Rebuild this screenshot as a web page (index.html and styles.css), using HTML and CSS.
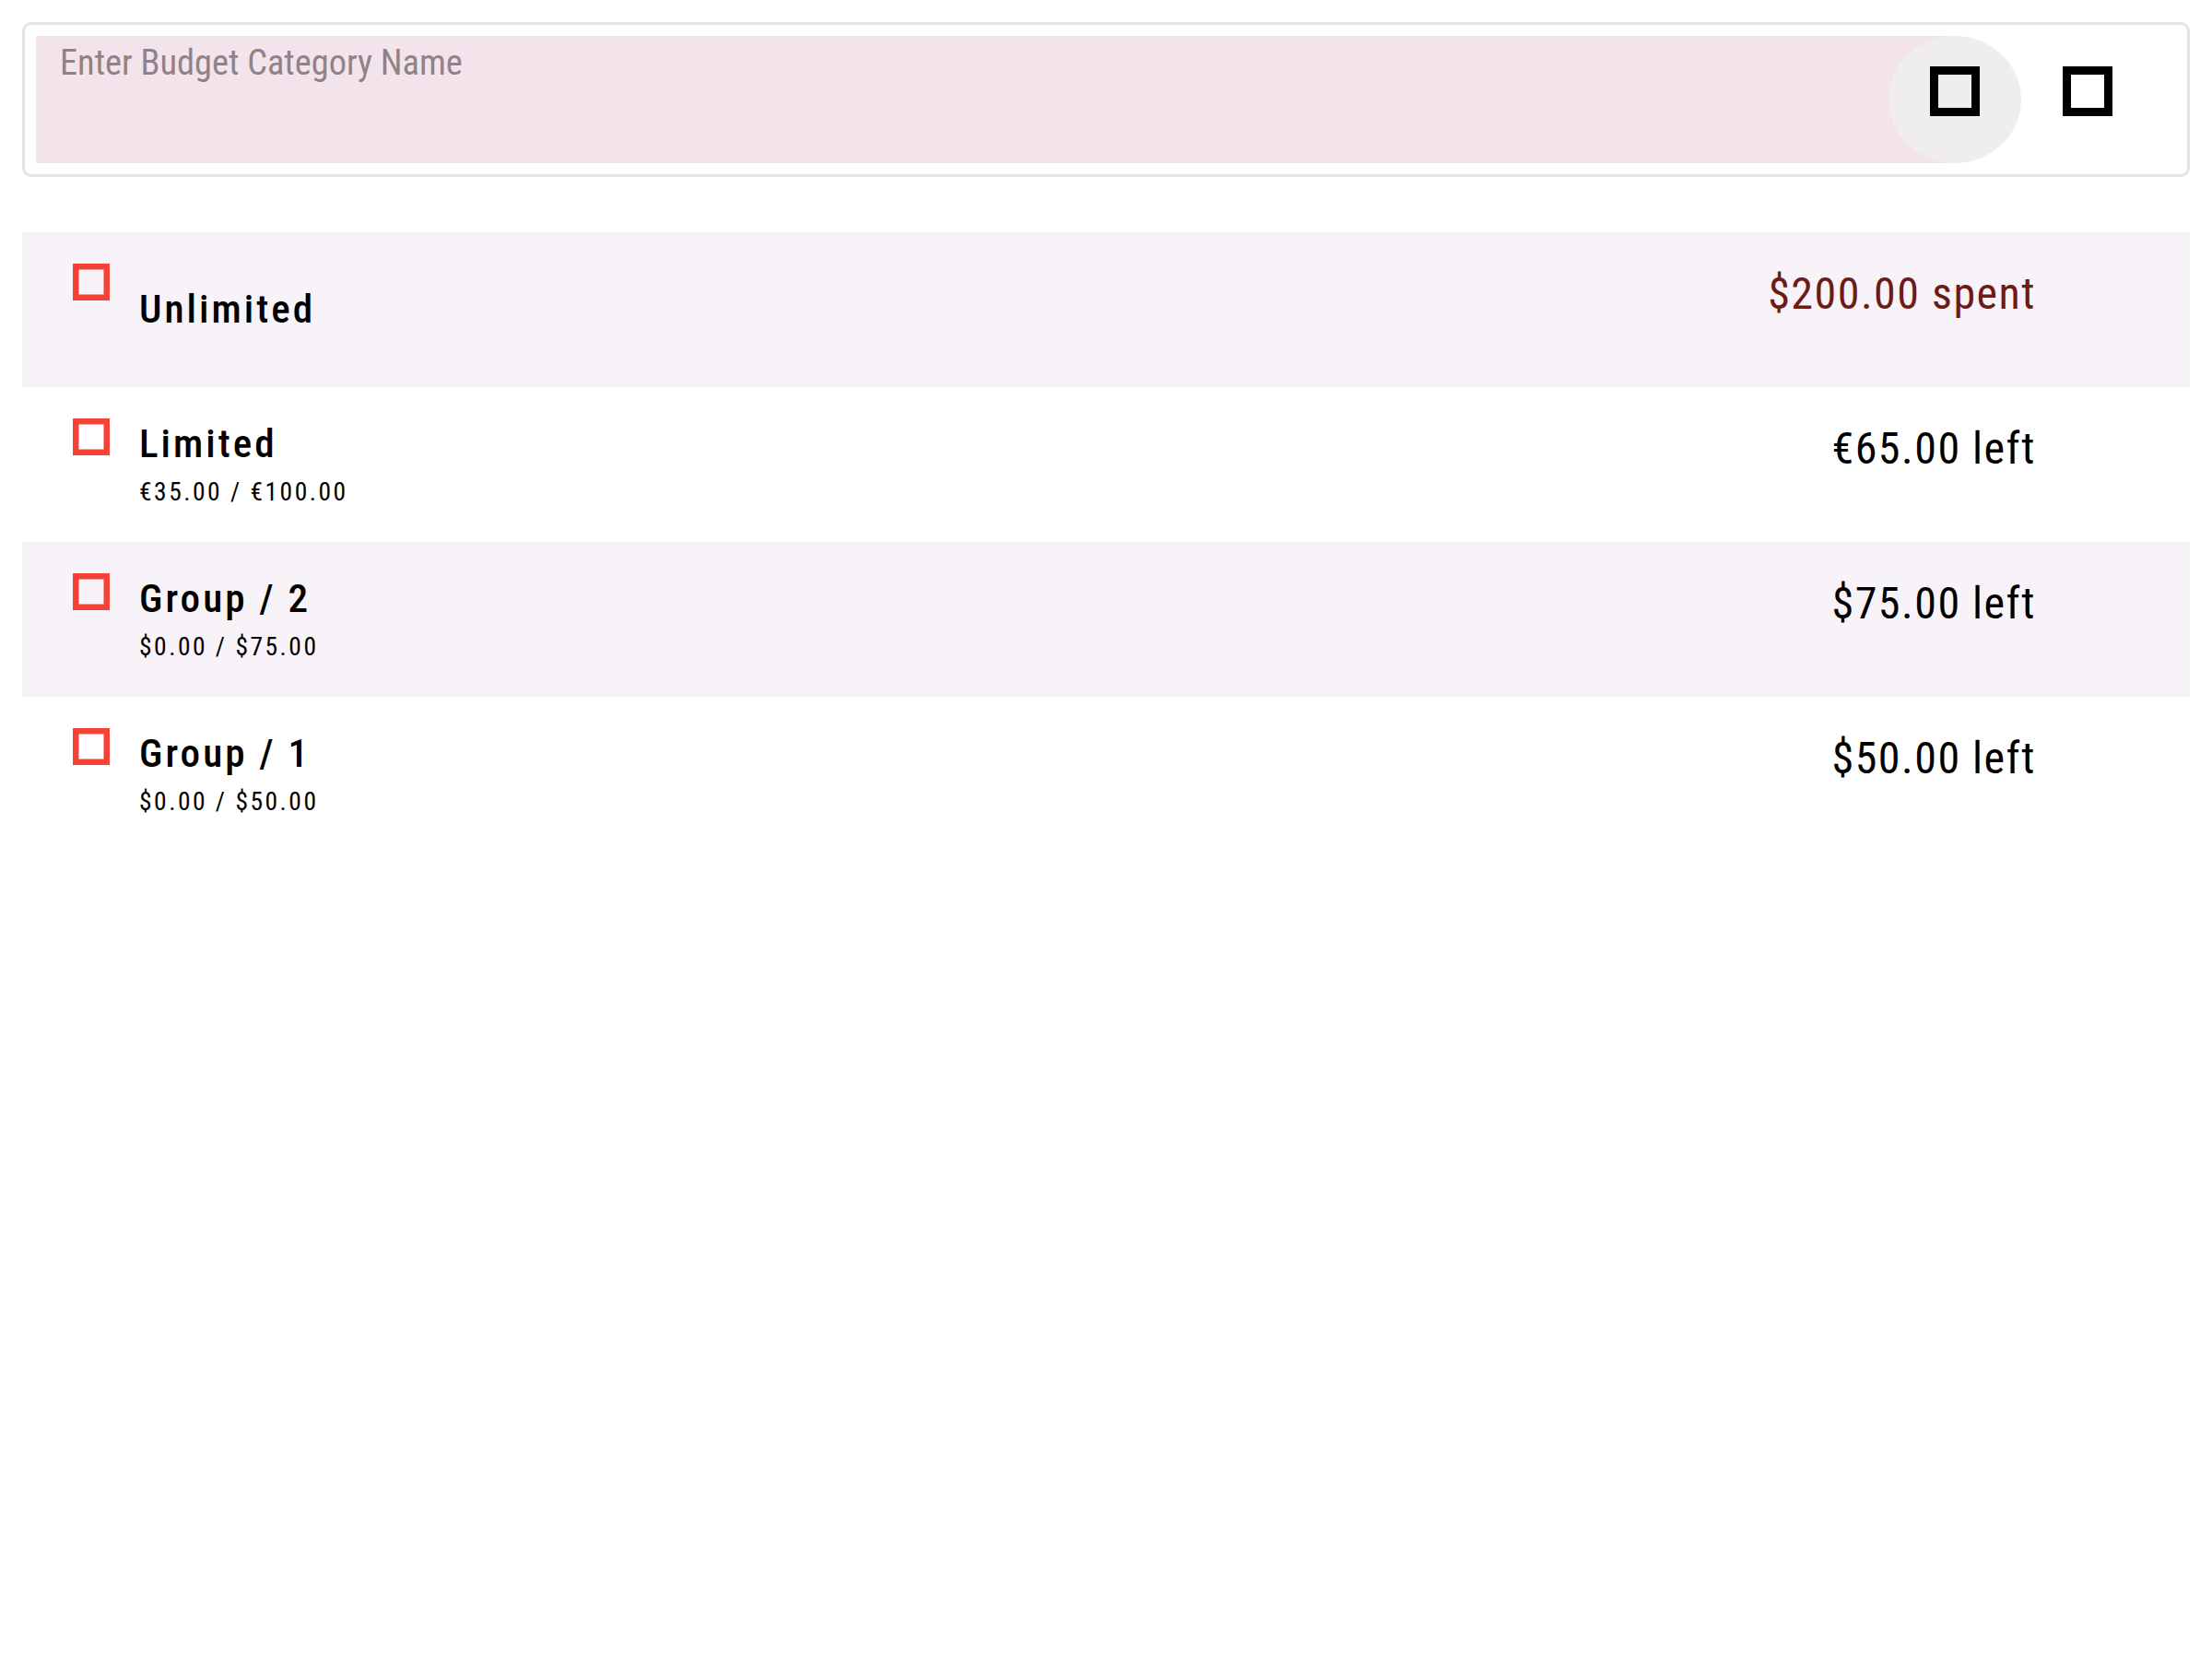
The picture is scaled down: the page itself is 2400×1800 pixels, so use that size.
FILE: index.html
```html
<!DOCTYPE html>
<html lang="en">
<head>
<meta charset="utf-8">
<title>Budget Categories</title>
<link rel="stylesheet" href="styles.css">
</head>
<body>
  <div class="search-card">
    <div class="field">
      <span class="placeholder">Enter Budget Category Name</span>
    </div>
    <button class="icon-btn active" type="button" aria-label="Search"><span class="glyph"></span></button>
    <button class="icon-btn" type="button" aria-label="Add"><span class="glyph"></span></button>
  </div>

  <div class="list">
    <div class="row shaded">
      <svg class="check" viewBox="0 0 40 40" aria-hidden="true"><rect x="3.25" y="3.25" width="33.5" height="33.5" fill="none" stroke="#f44336" stroke-width="6.5"/></svg>
      <div class="text single">
        <div class="title">Unlimited</div>
      </div>
      <div class="amount spent">$200.00 spent</div>
    </div>
    <div class="row">
      <svg class="check" viewBox="0 0 40 40" aria-hidden="true"><rect x="3.25" y="3.25" width="33.5" height="33.5" fill="none" stroke="#f44336" stroke-width="6.5"/></svg>
      <div class="text">
        <div class="title">Limited</div>
        <div class="subtitle">€35.00 / €100.00</div>
      </div>
      <div class="amount">€65.00 left</div>
    </div>
    <div class="row shaded">
      <svg class="check" viewBox="0 0 40 40" aria-hidden="true"><rect x="3.25" y="3.25" width="33.5" height="33.5" fill="none" stroke="#f44336" stroke-width="6.5"/></svg>
      <div class="text">
        <div class="title">Group / 2</div>
        <div class="subtitle">$0.00 / $75.00</div>
      </div>
      <div class="amount">$75.00 left</div>
    </div>
    <div class="row">
      <svg class="check" viewBox="0 0 40 40" aria-hidden="true"><rect x="3.25" y="3.25" width="33.5" height="33.5" fill="none" stroke="#f44336" stroke-width="6.5"/></svg>
      <div class="text">
        <div class="title">Group / 1</div>
        <div class="subtitle">$0.00 / $50.00</div>
      </div>
      <div class="amount">$50.00 left</div>
    </div>
  </div>
</body>
</html>
```

FILE: styles.css
```css
* { box-sizing: border-box; }

html, body {
  margin: 0;
  background: #ffffff;
}

body {
  padding: 24px;
  font-family: "Roboto Condensed", "Roboto", sans-serif;
  font-stretch: condensed;
  color: #000;
}

.search-card {
  display: flex;
  align-items: flex-start;
  height: 168px;
  padding: 12px 39px 12px 12px;
  border: 3px solid #e4e4e4;
  border-radius: 10px;
}

.field {
  flex: 1;
  height: 138px;
  padding: 6px 0 0 26px;
  background: #f3e4eb;
}

.placeholder {
  display: block;
  font-size: 38.4px;
  line-height: 46px;
  letter-spacing: 0;
  color: #8f8289;
}

.icon-btn {
  display: flex;
  flex-direction: column;
  align-items: center;
  flex: none;
  width: 138px;
  height: 138px;
  margin: 0 0 0 3px;
  padding: 33px 0 0;
  border: 0;
  border-radius: 50%;
  background: transparent;
}

.icon-btn.active {
  width: 144px;
  margin-left: -72px;
  background: #efeeec;
}

.glyph {
  display: block;
  width: 54px;
  height: 54px;
  border: 9px solid #000;
}

.list {
  margin-top: 60px;
}

.row {
  display: flex;
  align-items: flex-start;
  height: 168px;
  padding: 0 167px 0 55px;
}

.row.shaded {
  background: #f8f3f9;
}

.check {
  flex: none;
  width: 40px;
  height: 40px;
  margin-top: 34px;
}

.text {
  flex: 1;
  margin-left: 32px;
  padding-top: 37px;
}

.text.single {
  padding-top: 0;
  align-self: center;
}

.title {
  font-size: 43.2px;
  line-height: 50px;
  font-weight: 500;
  letter-spacing: 3px;
}

.subtitle {
  margin-top: 9px;
  font-size: 27.5px;
  line-height: 36px;
  letter-spacing: 2.5px;
}

.amount {
  flex: none;
  margin-top: 39px;
  font-size: 48px;
  line-height: 56px;
  letter-spacing: 1.5px;
}

.amount.spent {
  color: #6c1b17;
}
```
